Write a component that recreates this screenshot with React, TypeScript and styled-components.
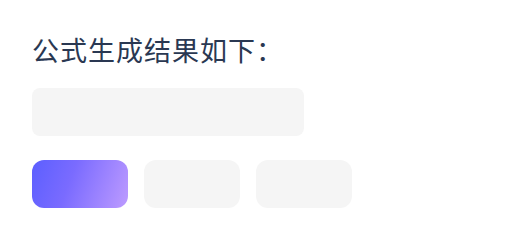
import React from "react";
import styled, { createGlobalStyle } from "styled-components";

const GlobalStyle = createGlobalStyle`
  html, body {
    margin: 0;
    padding: 0;
    background: #ffffff;
  }
`;

const Page = styled.div`
  padding: 32px;
  font-family: "Noto Sans CJK SC", "Noto Sans", sans-serif;
`;

const Title = styled.h1`
  margin: 0 0 20px;
  font-size: 27px;
  line-height: 36px;
  letter-spacing: 1px;
  font-weight: 400;
  color: #2a3852;
`;

const ResultBox = styled.div`
  width: 272px;
  height: 48px;
  border-radius: 8px;
  background: #f5f5f5;
`;

const Options = styled.div`
  display: flex;
  gap: 16px;
  margin-top: 24px;
`;

const Option = styled.div<{ $active?: boolean }>`
  width: 96px;
  height: 48px;
  border-radius: 12px;
  background: ${(p) =>
    p.$active ? "linear-gradient(110deg, #5c5fff 0%, #7a6bff 40%, #bd9bff 100%)" : "#f5f5f5"};
`;

const App: React.FC = () => {
  return (
    <Page>
      <GlobalStyle />
      <Title>公式生成结果如下：</Title>
      <ResultBox />
      <Options>
        <Option $active />
        <Option />
        <Option />
      </Options>
    </Page>
  );
};

export default App;
